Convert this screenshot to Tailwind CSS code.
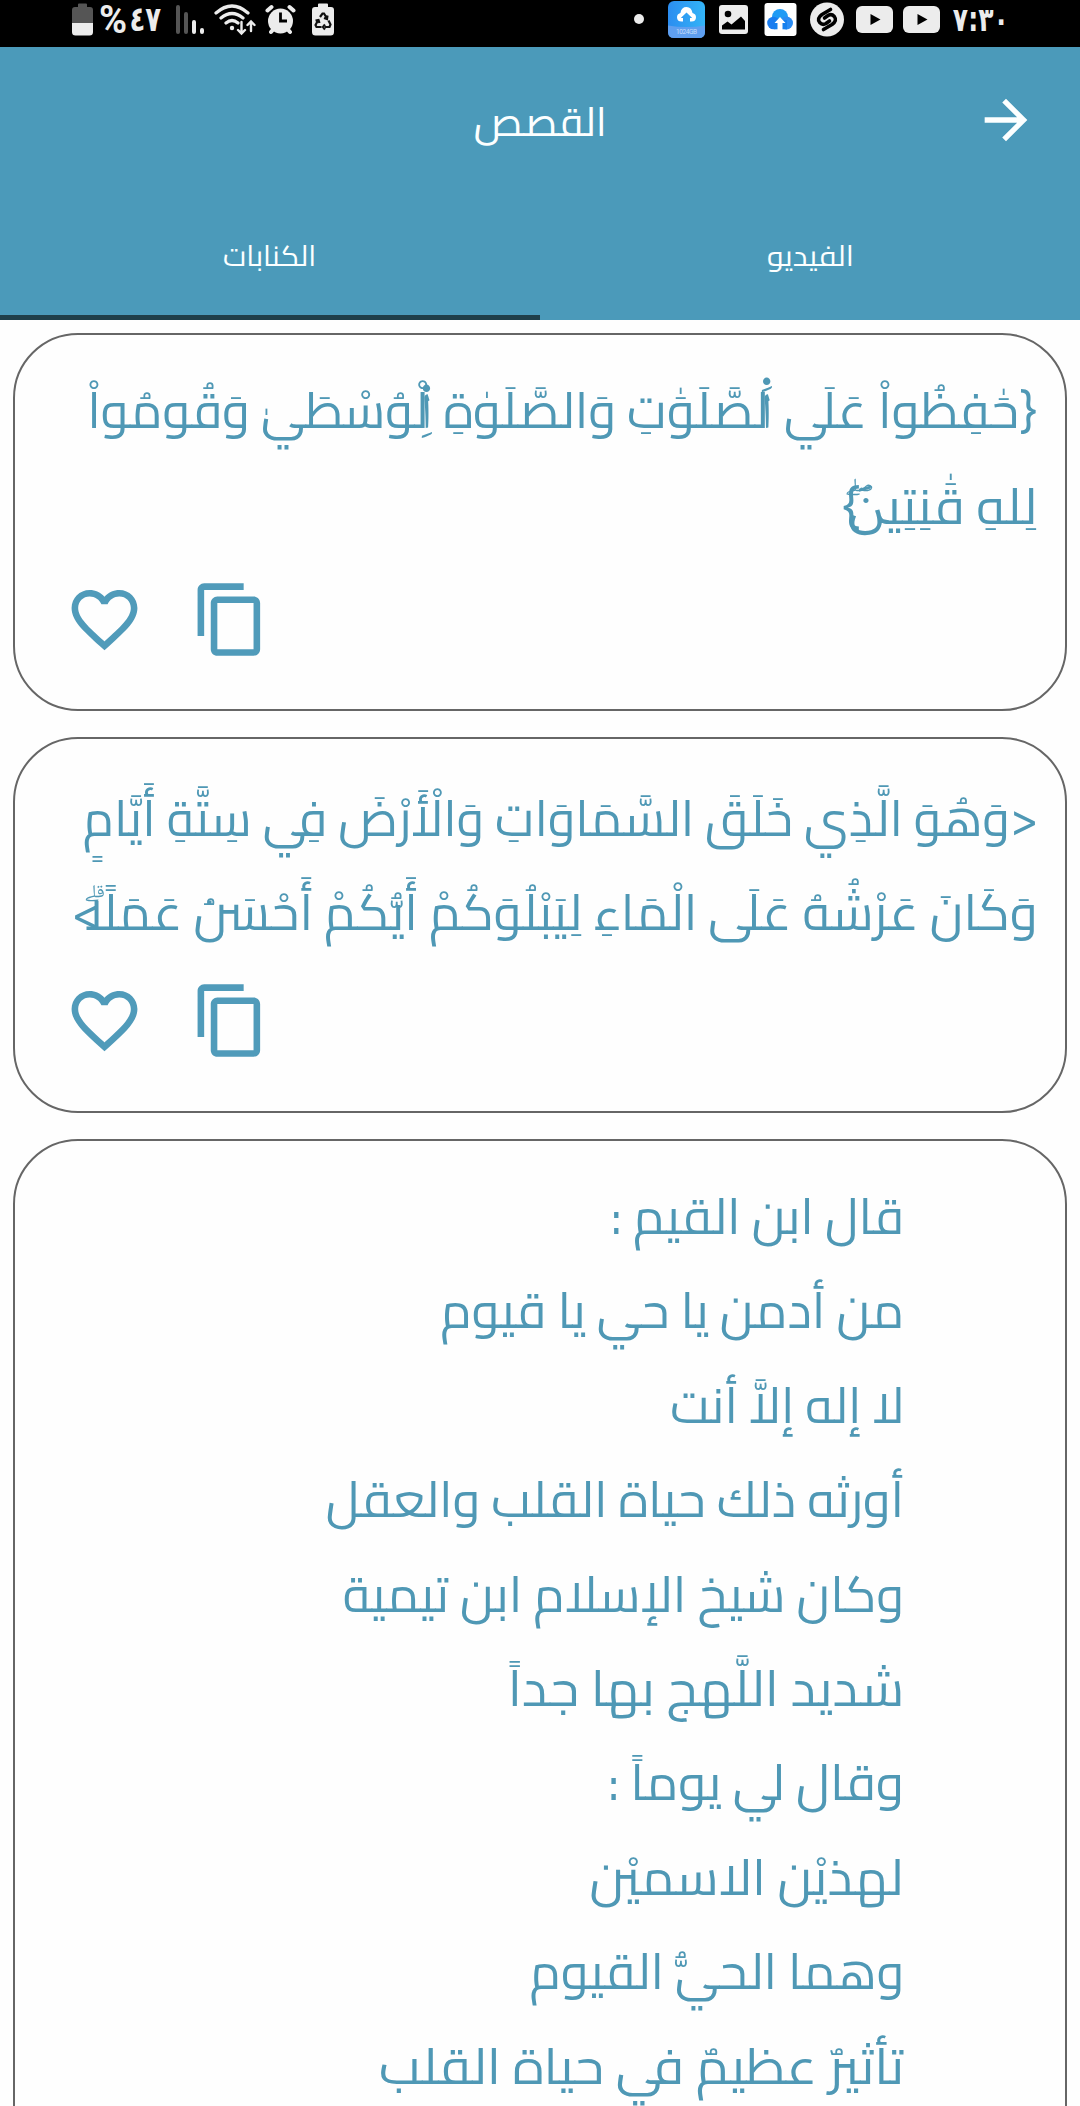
<!DOCTYPE html>
<html lang="ar" dir="rtl">
<head>
<meta charset="utf-8">
<meta name="viewport" content="width=device-width, initial-scale=1">
<title>القصص</title>
<script src="https://cdn.jsdelivr.net/npm/@tailwindcss/browser@4"></script>
</head>
<body class="bg-white font-[Cairo,'Noto_Naskh_Arabic','Noto_Sans_Arabic','Noto_Kufi_Arabic','DejaVu_Sans',sans-serif]">
<div class="flex h-[2106px] w-[1080px] flex-col overflow-hidden bg-[#fefefe]">

  <!-- Status bar -->
  <div dir="ltr" class="flex h-[47px] shrink-0 items-start bg-black text-[#ececec]">
    <svg class="ml-[72px] h-[47px] w-[21px]" viewBox="72 0 21 47"><path fill="#555" d="M78 4.500q0-1 1-1h7q1 0 1 1V7h3q3 0 3 3v13H72V10q0-3 3-3h3z"/><path fill="#ececec" d="M72 23h21v9q0 3.500-3.500 3.500h-14Q72 35.500 72 32z"/></svg>
    <div class="ml-[6px] flex h-[40px] w-[28px] items-center justify-center font-[Roboto] text-[38px] leading-[40px] font-bold"><span class="inline-block">%</span></div>
    <div class="ml-[2px] flex h-[38px] w-[32px] items-center justify-center font-['DejaVu_Sans'] text-[35px] leading-[38px] font-bold whitespace-nowrap"><span class="inline-block scale-x-[0.74]">٤٧</span></div>
    <svg class="ml-[14px] h-[47px] w-[29px]" viewBox="174 0 29 47" fill="none" stroke-width="4" stroke-linecap="round"><path stroke="#555" d="M177 7v25M185 14v18"/><path stroke="#ececec" d="M193 22v10M201 30v2"/></svg>
    <svg class="ml-[10px] h-[47px] w-[43px]" viewBox="213 0 43 47" fill="none" stroke="#ececec" stroke-width="3.200" stroke-linecap="round"><path d="M215 13q16-14 32 0M220 18q11-9 22 0M225 23q6-5 12 0"/><circle cx="231" cy="28" r="2.200" fill="#ececec" stroke="none"/><path stroke-width="2.400" d="M240.500 22v11M237 30l3.500 3.500L244 30M250 31V22M246.500 25l3.500-3.500 3.500 3.500"/></svg>
    <svg class="ml-[8px] h-[47px] w-[31px]" viewBox="264 0 31 47"><circle cx="279.500" cy="21" r="12.500" fill="#ececec"/><path fill="none" stroke="#ececec" stroke-width="4" stroke-linecap="round" d="M266.500 10.500l4-3.500M292.500 10.500l-4-3.500M270 32l3-3.500M289 32l-3-3.500"/><path fill="none" stroke="#000" stroke-width="2.800" d="M279.500 12.500v8.500h6.500"/></svg>
    <svg class="ml-[16px] h-[47px] w-[22px]" viewBox="311 0 22 47"><path fill="#ececec" d="M317 4.500q0-1 1-1h8q1 0 1 1V7h3q3 0 3 3v22q0 3.500-3.500 3.500h-15Q311 35.500 311 32V10q0-3 3-3h3z"/><path fill="none" stroke="#111" stroke-width="2.200" d="M319 17l2.500-3.500h1.500l3 5M327.500 20.500l2 4-1 2.500H324M320.500 27H315.500l-1-2 2.500-4.500M324 24.500l-2 2.500 2 2.500M314.500 20.500l3-.5 1 3M326.500 15.500l-.5 3.500-3-1"/></svg>

    <svg class="ml-[300px] h-[47px] w-[10px]" viewBox="633 0 10 47"><circle cx="638" cy="19" r="5" fill="#ececec"/></svg>
    <svg class="ml-[24px] h-[47px] w-[37px]" viewBox="667 0 37 47">
      <defs><linearGradient id="app" x1="0" y1="0" x2="1" y2="0"><stop offset="0" stop-color="#2b8df0"/><stop offset="1" stop-color="#33b4f7"/></linearGradient></defs>
      <rect x="667" y="1" width="37" height="37" rx="6" fill="url(#app)"/>
      <path fill="#5f9ff0" d="M667 25.500q18.500 3 37 0V32q0 6-6 6h-25q-6 0-6-6z"/>
      <path fill="#fff" d="M682 21.500h-1.500q-4.500 0-4.500-4.200 0-3.300 3.400-4.300Q680.500 7 685.500 7t6 6q3.500 1 3.500 4.300 0 4.200-4.500 4.200H689v-3.500h2.200l-5.700-5.500-5.700 5.500h2.200z"/>
      <text x="685.500" y="34.300" text-anchor="middle" textLength="21" font-family="Roboto" font-size="6.500" fill="#c5ddfa">1024GB</text>
    </svg>
    <svg class="ml-[14px] h-[47px] w-[29px]" viewBox="718 0 29 47"><rect x="718" y="5" width="29" height="29" rx="3" fill="#ececec"/><circle cx="727" cy="14" r="3.300"/><path d="M721 29.500v-4l5.500-4 4 3 9.500-8 4 4.500v8.500z"/></svg>
    <svg class="ml-[16px] h-[47px] w-[33px]" viewBox="763 0 33 47"><rect x="763.500" y="3" width="32" height="33" rx="3" fill="#fff"/><circle cx="779" cy="17" r="8" fill="#1f9bf5"/><circle cx="772.500" cy="23" r="6.300" fill="#1a7df0"/><circle cx="785.500" cy="23" r="6.500" fill="#2a8cf3"/><path fill="#1580ee" d="M773 20h13v9.300h-13z"/><path fill="#fff" d="M779 17l5.500 6h-3v7h-5v-7h-3z"/></svg>
    <svg class="ml-[13px] h-[47px] w-[34px]" viewBox="809 0 34 47"><circle cx="826" cy="19.500" r="17" fill="#ececec"/><path fill="none" stroke="#000" stroke-width="3.600" stroke-linecap="round" stroke-linejoin="round" d="M829.500 9.500l-8.500 5q-5.500 4-2.300 8 2.800 3 6.300 1l3.500-2.500M822.500 29.500l8.500-5q5.500-4 2.300-8-2.800-3-6.300-1l-3.500 2.500"/></svg>
    <svg class="ml-[12px] h-[47px] w-[37px]" viewBox="0 0 37 47"><rect y="6" width="37" height="27" rx="6" fill="#ececec"/><path d="M14.500 14v11l10-5.500z"/></svg>
    <svg class="ml-[10px] h-[47px] w-[37px]" viewBox="0 0 37 47"><rect y="6" width="37" height="27" rx="6" fill="#ececec"/><path d="M14.500 14v11l10-5.500z"/></svg>
    <div class="ml-[12px] flex h-[40px] w-[58px] items-center justify-center font-['DejaVu_Sans'] text-[33px] leading-[40px] font-bold whitespace-nowrap"><bdo dir="ltr" class="inline-block scale-x-[0.76]">٧:٣٠</bdo></div>
  </div>

  <!-- App bar -->
  <header class="flex h-[273px] shrink-0 flex-col bg-[#4b9aba] text-[#fcffff]">
    <div class="grid h-[146px] grid-cols-[106px_1fr_106px] items-center">
      <svg class="mr-[42px] h-[64px] w-[64px]" viewBox="0 0 24 24" fill="currentColor"><path d="M12 4l-1.410 1.410L16.170 11H4v2h12.170l-5.580 5.590L12 20l8-8z"/></svg>
      <h1 class="pt-[4px] text-center text-[40px] leading-[76px]"><span class="inline-block scale-x-[1.02]">القصص</span></h1>
    </div>
    <nav class="grid flex-1 grid-cols-2 text-center text-[29px]">
      <a class="flex items-center justify-center pb-[2px]"><span class="inline-block scale-x-[1.05]">الفيديو</span></a>
      <a class="flex items-center justify-center border-b-[5px] border-[#1f3f4a] pt-[3px]"><span class="inline-block scale-x-[1.024]">الكنابات</span></a>
    </nav>
  </header>

  <main class="flex flex-col gap-[26px] px-[13px] pt-[13px] text-[50.400px] leading-[94.400px] whitespace-nowrap text-[#4f98b5]">
    <article class="flex h-[378px] shrink-0 flex-col rounded-[65px] border-[2.700px] border-[#666] pt-[28px] pr-[28px]">
      <p class="h-[96px]"><span class="inline-block origin-right scale-x-[1.003]">{حَٰفِظُواْ عَلَي <span class="-ml-[8px]">اَ۬</span>لصَّلَوَٰتِ وَالصَّلَوٰةِ <span class="-ml-[8px]">اِ۬</span>لْوُسْطَيٰ وَقُومُواْ</span></p>
      <p class="h-[96px]"><span class="inline-block origin-right scale-x-[1.04]">لِلهِ قَٰنِتِي<span class="font-['Noto_Sans_Arabic']">نَ<span class="relative"><span class="absolute -right-[16px] bottom-[30px] font-['Noto_Naskh_Arabic'] leading-none">&nbsp;ۖ</span></span></span><span class="-mr-[12px]">}</span></span></p>
      <div dir="ltr" class="flex gap-[47px] pl-[50px] pt-[25px] text-[#509bba]">
        <svg class="h-[79px] w-[79px]" viewBox="0 0 24 24" fill="currentColor"><path d="M16.500 3c-1.740 0-3.410.81-4.500 2.090C10.910 3.810 9.240 3 7.500 3 4.420 3 2 5.420 2 8.500c0 3.780 3.400 6.860 8.550 11.540L12 21.350l1.450-1.320C18.600 15.360 22 12.280 22 8.500 22 5.420 19.580 3 16.500 3zm-4.400 15.550l-.1.100-.1-.1C7.140 14.240 4 11.390 4 8.500 4 6.500 5.500 5 7.500 5c1.540 0 3.040.99 3.570 2.360h1.870C13.460 5.990 14.960 5 16.500 5c2 0 3.500 1.500 3.500 3.500 0 2.890-3.140 5.740-7.900 10.050z"/></svg>
        <svg class="h-[79px] w-[79px]" viewBox="0 0 24 24" fill="currentColor"><path d="M16 1H4c-1.100 0-2 .9-2 2v14h2V3h12V1zm3 4H8c-1.100 0-2 .9-2 2v14c0 1.100.9 2 2 2h11c1.100 0 2-.9 2-2V7c0-1.100-.9-2-2-2zm0 16H8V7h11v14z"/></svg>
      </div>
    </article>

    <article class="flex h-[376px] shrink-0 flex-col rounded-[65px] border-[2.700px] border-[#666] pt-[31.500px] pr-[27px]">
      <p class="h-[94.400px]"><span class="inline-block origin-right scale-x-[0.993]">&lt;وَهُوَ الَّذِي خَلَقَ السَّمَاوَاتِ وَالْأَرْضَ فِي سِتَّةِ أَيَّامٍ</span></p>
      <p class="h-[94.400px]"><span class="inline-block origin-right scale-x-[1.003]">وَكَانَ عَرْشُهُ عَلَى الْمَاءِ لِيَبْلُوَكُمْ أَيُّكُمْ أَحْسَنُ عَمَلًا<span class="relative"><span class="absolute -right-[16px] bottom-[28px] leading-none">&nbsp;ۗ</span></span><span class="-mr-[16px]">&gt;</span></span></p>
      <div dir="ltr" class="flex gap-[47px] pl-[50px] pt-[21.500px] text-[#509bba]">
        <svg class="h-[79px] w-[79px]" viewBox="0 0 24 24" fill="currentColor"><path d="M16.500 3c-1.740 0-3.410.81-4.500 2.090C10.910 3.810 9.240 3 7.500 3 4.420 3 2 5.420 2 8.500c0 3.780 3.400 6.860 8.550 11.540L12 21.350l1.450-1.320C18.600 15.360 22 12.280 22 8.500 22 5.420 19.580 3 16.500 3zm-4.400 15.550l-.1.100-.1-.1C7.140 14.240 4 11.390 4 8.500 4 6.500 5.500 5 7.500 5c1.540 0 3.040.99 3.570 2.360h1.870C13.460 5.990 14.960 5 16.500 5c2 0 3.500 1.500 3.500 3.500 0 2.890-3.140 5.740-7.900 10.050z"/></svg>
        <svg class="h-[79px] w-[79px]" viewBox="0 0 24 24" fill="currentColor"><path d="M16 1H4c-1.100 0-2 .9-2 2v14h2V3h12V1zm3 4H8c-1.100 0-2 .9-2 2v14c0 1.100.9 2 2 2h11c1.100 0 2-.9 2-2V7c0-1.100-.9-2-2-2zm0 16H8V7h11v14z"/></svg>
      </div>
    </article>

    <article class="flex h-[1100px] shrink-0 flex-col rounded-[65px] border-[2.700px] border-[#666] pt-[28px] pr-[161px]">
      <p><span class="inline-block origin-right">قال ابن القيم :</span></p>
      <p><span class="inline-block origin-right">من أدمن يا حي يا قيوم</span></p>
      <p><span class="inline-block origin-right scale-x-[0.99]">لا إله إلاَّ أنت</span></p>
      <p><span class="inline-block origin-right">أورثه ذلك حياة القلب والعقل</span></p>
      <p><span class="inline-block origin-right">وكان شيخ الإسلام ابن تيمية</span></p>
      <p><span class="inline-block origin-right scale-x-[1.043]">شديد اللَّهج بها جداً</span></p>
      <p><span class="inline-block origin-right scale-x-[1.014]">وقال لي يوماً :</span></p>
      <p><span class="inline-block origin-right scale-x-[1.028]">لهذيْن الاسميْن</span></p>
      <p><span class="inline-block origin-right scale-x-[0.996]">وهما الحيُّ القيوم</span></p>
      <p><span class="inline-block origin-right scale-x-[1.05]">تأثيرٌ عظيمٌ في حياة القلب</span></p>
    </article>
  </main>
</div>
</body></html>
